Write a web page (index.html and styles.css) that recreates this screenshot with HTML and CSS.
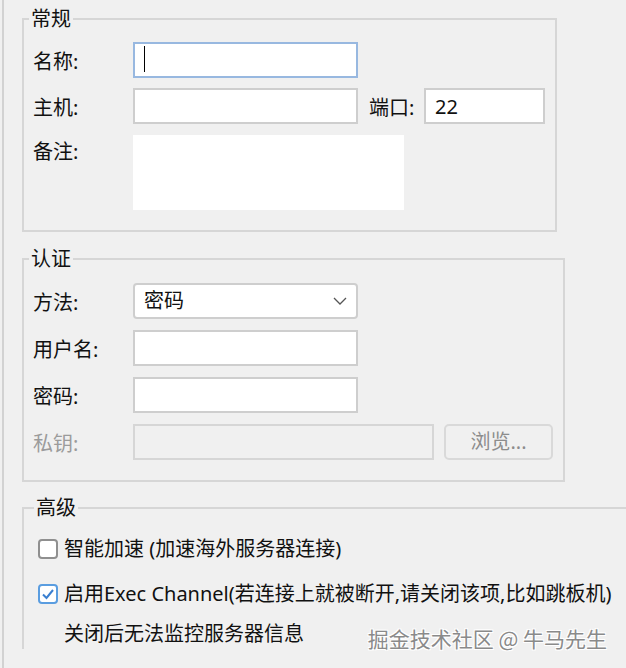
FILE: index.html
```html
<!DOCTYPE html>
<html lang="zh-CN">
<head>
<meta charset="utf-8">
<title>会话设置</title>
<link rel="stylesheet" href="styles.css">
</head>
<body>
<div class="window">
  <fieldset class="group general">
    <legend>常规</legend>
    <div class="form">
      <label class="lbl">名称:</label>
      <span class="caret-wrap"><input class="input w225 focused" type="text" value=""><span class="caret"></span></span>
      <label class="lbl">主机:</label>
      <div class="hostrow">
        <input class="input w225" type="text" value="">
        <label class="lbl port-lbl">端口:</label>
        <input class="input w121" type="text" value="22">
      </div>
      <label class="lbl lbl-top">备注:</label>
      <textarea class="notes"></textarea>
    </div>
  </fieldset>

  <fieldset class="group auth">
    <legend>认证</legend>
    <div class="form">
      <label class="lbl">方法:</label>
      <div class="combo w225">
        <span>密码</span>
        <svg class="chev" width="14" height="8" viewBox="0 0 14 8"><path d="M1 1 L7 7 L13 1" fill="none" stroke="#555" stroke-width="1.3"/></svg>
      </div>
      <label class="lbl">用户名:</label>
      <input class="input w225" type="text" value="">
      <label class="lbl">密码:</label>
      <input class="input w225" type="password" value="">
      <label class="lbl disabled">私钥:</label>
      <div class="keyrow">
        <input class="input key" type="text" value="" disabled>
        <button class="browse" type="button" disabled>浏览...</button>
      </div>
    </div>
  </fieldset>

  <fieldset class="group advanced">
    <legend>高级</legend>
    <div class="opt">
      <span class="box"></span>
      <span>智能加速 (加速海外服务器连接)</span>
    </div>
    <div class="opt">
      <span class="box checked"><svg width="16" height="16" viewBox="0 0 16 16"><path d="M3 8.5 L6.5 12 L13 4" fill="none" stroke="#3a7fd0" stroke-width="2"/></svg></span>
      <span>启用Exec Channel(若连接上就被断开,请关闭该项,比如跳板机)</span>
    </div>
    <div class="note">关闭后无法监控服务器信息</div>
  </fieldset>

  <div class="watermark">掘金技术社区 @ 牛马先生</div>
</div>
</body>
</html>
```

FILE: styles.css
```css
* { box-sizing: border-box; }
html, body { margin: 0; height: 100%; }
body {
  background: #f0f0f0;
  font-family: "Noto Sans", "Noto Sans CJK SC", sans-serif;
  font-size: 20px;
  line-height: 30px;
  color: #111;
  overflow: hidden;
}
.window {
  position: relative;
  height: 100vh;
  margin-left: 2px;
  border-left: 2px solid #d2d2d2;
  padding-left: 18px;
  overflow: hidden;
}
.group {
  margin: 0;
  min-width: 0;
  border: 2px solid #d6d6d6;
  padding: 13px 10px 20px 9px;
}
.group legend {
  padding: 0 2px;
  margin-left: -4px;
  font-size: 20px;
  line-height: 20px;
}
.general { margin-top: 9px; width: 535px; }
.auth { margin-top: 17px; width: 543px; padding-top: 14px; }
.advanced {
  margin-top: 16px;
  border-right: 0;
  border-bottom: 0;
  padding: 16px 0 0 14px;
}

.form {
  display: grid;
  grid-template-columns: 100px auto;
  row-gap: 10px;
  align-items: center;
  justify-items: start;
}
.auth .form { row-gap: 11px; }
.lbl { white-space: nowrap; padding-top: 3px; }
.lbl-top { align-self: start; margin-top: 0; }
.lbl.disabled { color: #9b9b9b; }

.input {
  height: 36px;
  border: 2px solid #cecece;
  background: #fff;
  font: inherit;
  color: #111;
  padding: 0 9px;
  outline: none;
  border-radius: 0;
  margin: 0;
}
.w225 { width: 225px; }
.w121 { width: 121px; }
.focused { border-color: #98b8e0; }
.caret-wrap { position: relative; display: block; }
.caret {
  position: absolute;
  left: 11px;
  top: 4px;
  width: 1px;
  height: 26px;
  background: #000;
}
.hostrow { display: flex; align-items: center; }
.port-lbl { width: 44px; margin: 0 11px; }
.notes {
  width: 271px;
  height: 75px;
  margin: 1px 0 0;
  border: 0;
  background: #fff;
  resize: none;
  font: inherit;
}

.combo {
  height: 36px;
  border: 2px solid #cecece;
  border-radius: 4px;
  background: #fff;
  display: flex;
  align-items: center;
  justify-content: space-between;
  padding: 0 9px 0 9px;
}
.chev { display: block; }
.keyrow { display: flex; align-items: center; }
.key { width: 301px; background: #f0f0f0; border-color: #d6d6d6; }
.browse {
  width: 109px;
  height: 36px;
  margin-left: 10px;
  border: 2px solid #d9d9d9;
  border-radius: 5px;
  background: #f0f0f0;
  color: #8c8c8c;
  font: inherit;
  padding: 0;
}

.opt { display: flex; align-items: center; height: 30px; white-space: nowrap; }
.opt + .opt { margin-top: 15px; }
.box {
  width: 20px;
  height: 20px;
  border: 2px solid #8f8f8f;
  border-radius: 4px;
  background: #fff;
  margin-right: 6px;
  display: flex;
  align-items: center;
  justify-content: center;
  flex: none;
}
.box.checked { border-color: #5a9de0; }
.box svg { display: block; }
.note { margin-top: 10px; padding-left: 26px; height: 30px; }

.watermark {
  position: absolute;
  right: 19px;
  top: 625px;
  font-family: "Noto Sans CJK SC", sans-serif;
  font-size: 21px;
  line-height: 26px;
  color: #8a8a8a;
  text-shadow: 1px 1px 0 #fff, -1px -1px 0 #fff, 1px -1px 0 #fff, -1px 1px 0 #fff;
  white-space: nowrap;
}
```
